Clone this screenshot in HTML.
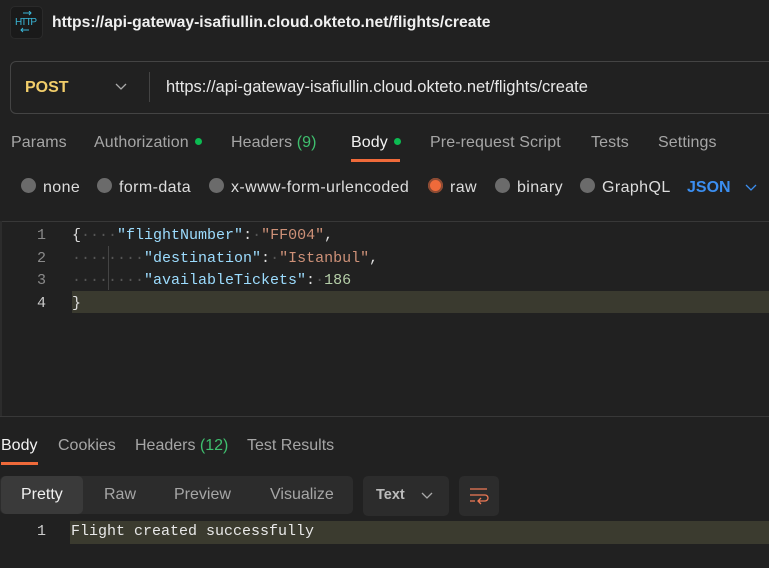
<!DOCTYPE html>
<html><head><style>
body{margin:0;width:769px;height:568px;background:#212121;font-family:"Liberation Sans",sans-serif;color:#ddd;position:relative;overflow:hidden}
.a{position:absolute;white-space:nowrap}
.tab{font-size:16px;color:#a6a6a6;top:134px;letter-spacing:0.1px}
.dot{display:inline-block;width:7px;height:7px;border-radius:50%;background:#0cbb52;margin-left:6px;vertical-align:middle;position:relative;top:-1px}
.r{font-size:16px;color:#ddd;top:179px;letter-spacing:0.4px}
.rb{display:inline-block;width:15px;height:15px;border-radius:50%;background:#6b6b6b;vertical-align:middle;margin-right:7px;position:relative;top:-2px}
.mono{font-family:"Liberation Mono",monospace;font-size:15px}
.ln{color:#8a8a8a;width:26px;text-align:right}
.k{color:#9cdcfe}.s{color:#ce9178}.n{color:#b5cea8}.d{color:#555}
</style></head><body>
<div class="a" style="left:10px;top:6px;width:31px;height:31px;border-radius:5px;background:#1a1a1a;border:1px solid #2a2a2a"></div>
<svg class="a" style="left:14px;top:11px" width="24" height="22" viewBox="0 0 24 22"><path d="M9 2h8M15 0l2 2-2 2M7 19h8M9 17l-2 2 2 2" stroke="#3ab7d8" fill="none" stroke-width="1"/><text x="1" y="14" font-size="10" fill="#3ab7d8" font-family="Liberation Sans" textLength="22">HTTP</text></svg>
<div class="a" style="left:52px;top:14px;font-size:15.7px;font-weight:bold;color:#f0f0f0">https://api-gateway-isafiullin.cloud.okteto.net/flights/create</div>
<div class="a" style="left:10px;top:61px;width:770px;height:51px;border:1px solid #444;border-radius:6px;background:#212121"></div>
<div class="a" style="left:25px;top:79px;font-size:16px;font-weight:bold;color:#f2ce6a">POST</div>
<svg class="a" style="left:115px;top:83px" width="12" height="8"><path d="M1 1l5 5 5-5" stroke="#aaa" fill="none" stroke-width="1.3"/></svg>
<div class="a" style="left:149px;top:72px;width:1px;height:30px;background:#444"></div>
<div class="a" style="left:166px;top:78px;font-size:16.5px;color:#e8e8e8">https://api-gateway-isafiullin.cloud.okteto.net/flights/create</div>
<div class="a tab" style="left:11px">Params</div>
<div class="a tab" style="left:94px">Authorization<span class="dot"></span></div>
<div class="a tab" style="left:231px">Headers <span style="color:#3fbf6e">(9)</span></div>
<div class="a tab" style="left:351px;color:#f2f2f2">Body<span class="dot"></span></div>
<div class="a" style="left:351px;top:159px;width:49px;height:3px;background:#ef6a3a"></div>
<div class="a tab" style="left:430px">Pre-request Script</div>
<div class="a tab" style="left:591px">Tests</div>
<div class="a tab" style="left:658px">Settings</div>
<div class="a r" style="left:21px"><span class="rb"></span>none</div>
<div class="a r" style="left:97px"><span class="rb"></span>form-data</div>
<div class="a r" style="left:209px"><span class="rb"></span>x-www-form-urlencoded</div>
<div class="a r" style="left:428px"><span class="rb" style="background:#ef6a3a;box-shadow:inset 0 0 0 2px #8a4a33"></span>raw</div>
<div class="a r" style="left:495px"><span class="rb"></span>binary</div>
<div class="a r" style="left:580px"><span class="rb"></span>GraphQL</div>
<div class="a" style="left:687px;top:179px;font-size:16px;font-weight:bold;color:#3b8ef0">JSON</div>
<svg class="a" style="left:745px;top:184px" width="12" height="8"><path d="M1 1l5 5 5-5" stroke="#3b8ef0" fill="none" stroke-width="1.3"/></svg>
<div class="a" style="left:0;top:221px;width:769px;height:1px;background:#383838"></div>
<div class="a" style="left:0;top:221px;width:2px;height:196px;background:#2c2c2c"></div>
<div class="a" style="left:0;top:416px;width:769px;height:1px;background:#383838"></div>
<div class="a" style="left:72px;top:291px;width:700px;height:22px;background:#3a3a2f"></div>
<div class="a" style="left:108px;top:246px;width:1px;height:44px;background:#444"></div>
<div class="a mono" style="left:20px;top:225px;line-height:22.5px">
<div><span class="ln" style="display:inline-block">1</span></div>
<div><span class="ln" style="display:inline-block">2</span></div>
<div><span class="ln" style="display:inline-block">3</span></div>
<div><span class="ln" style="display:inline-block;color:#ccc">4</span></div>
</div>
<div class="a mono" style="left:72px;top:225px;line-height:22.5px;color:#ddd">
<div>{<span class="d">····</span><span class="k">"flightNumber"</span>:<span class="d">·</span><span class="s">"FF004"</span>,</div>
<div><span class="d">········</span><span class="k">"destination"</span>:<span class="d">·</span><span class="s">"Istanbul"</span>,</div>
<div><span class="d">········</span><span class="k">"availableTickets"</span>:<span class="d">·</span><span class="n">186</span></div>
<div>}</div>
</div>
<div class="a" style="left:1px;top:437px;font-size:16px;color:#f2f2f2">Body</div>
<div class="a" style="left:1px;top:462px;width:37px;height:3px;background:#ef6a3a"></div>
<div class="a" style="left:58px;top:437px;font-size:16px;color:#a6a6a6">Cookies</div>
<div class="a" style="left:135px;top:437px;font-size:16px;color:#a6a6a6">Headers <span style="color:#3fbf6e">(12)</span></div>
<div class="a" style="left:247px;top:437px;font-size:16px;color:#a6a6a6">Test Results</div>
<div class="a" style="left:0;top:476px;width:353px;height:38px;border-radius:5px;background:#2c2c2c"></div>
<div class="a" style="left:1px;top:476px;width:82px;height:38px;border-radius:5px;background:#3a3a3a"></div>
<div class="a" style="left:21px;top:486px;font-size:16px;color:#f0f0f0">Pretty</div>
<div class="a" style="left:104px;top:486px;font-size:16px;color:#a6a6a6">Raw</div>
<div class="a" style="left:174px;top:486px;font-size:16px;color:#a6a6a6">Preview</div>
<div class="a" style="left:270px;top:486px;font-size:16px;color:#a6a6a6">Visualize</div>
<div class="a" style="left:363px;top:476px;width:86px;height:40px;border-radius:5px;background:#2c2c2c"></div>
<div class="a" style="left:376px;top:487px;font-size:14.5px;font-weight:bold;color:#bbb">Text</div>
<svg class="a" style="left:421px;top:492px" width="12" height="8"><path d="M1 1l5 5 5-5" stroke="#aaa" fill="none" stroke-width="1.3"/></svg>
<div class="a" style="left:459px;top:476px;width:40px;height:40px;border-radius:5px;background:#2c2c2c"></div>
<svg class="a" style="left:469px;top:486px" width="20" height="20"><path d="M1 3h17M1 9h15a3 3 0 0 1 0 6h-6M12 12l-3 3 3 3M1 15h5" stroke="#ef7a55" fill="none" stroke-width="1.3"/></svg>
<div class="a" style="left:70px;top:521px;width:700px;height:23px;background:#3b3b2f"></div>
<div class="a mono" style="left:20px;top:523px"><span class="ln" style="display:inline-block;color:#ccc">1</span></div>
<div class="a mono" style="left:71px;top:523px;color:#e8e8e8">Flight created successfully</div>
</body></html>
